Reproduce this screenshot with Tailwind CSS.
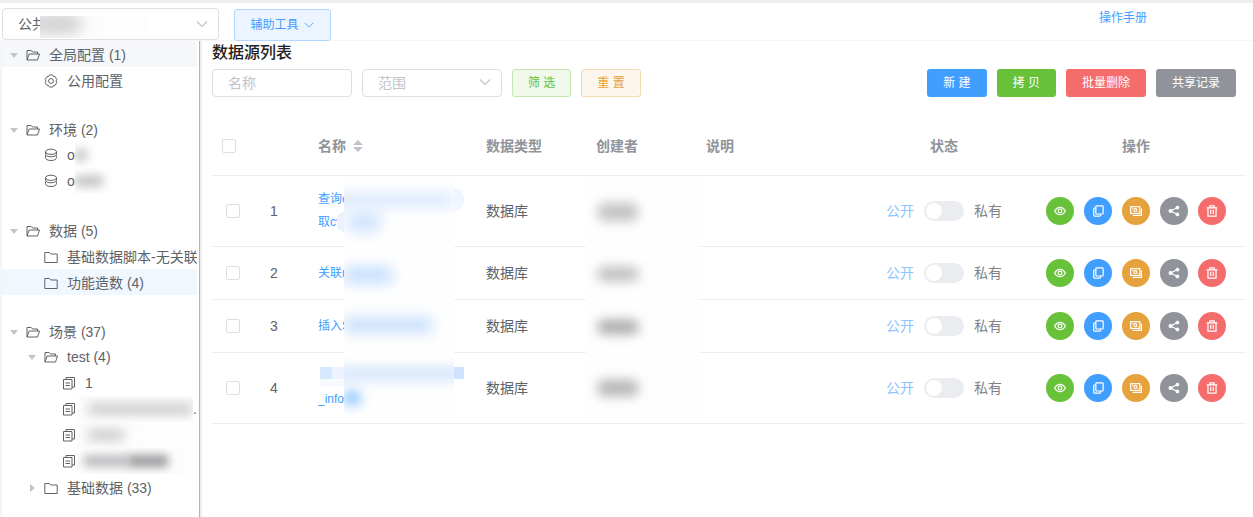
<!DOCTYPE html>
<html lang="zh-CN">
<head>
    <meta charset="UTF-8">
    <meta name="viewport" content="width=device-width, initial-scale=1.0">
    <title>数据源列表</title>
    <script src="https://cdn.jsdelivr.net/npm/@tailwindcss/browser@4"></script>
</head>
<body class="min-h-screen flex flex-col bg-white text-sm text-[#606266] font-['Liberation_Sans','Noto_Sans_CJK_SC',sans-serif]">

    <!-- Icons -->
    <svg class="hidden" xmlns="http://www.w3.org/2000/svg">
        <symbol id="i-folder-open" viewBox="0 0 14 14"><path d="M1 12V2.500h4.200l1.400 1.500H11.500V6M1 12l2.200-6h10.300l-2 6z"/></symbol>
        <symbol id="i-folder" viewBox="0 0 14 14"><path d="M.8 2.500h4.600l1.400 1.500h6.400V12.500H.8z"/></symbol>
        <symbol id="i-setting" viewBox="0 0 14 14"><path d="M5.200 1.200 7 .8l1.800.4.6 1.300 1.700.1 1.700 2.900-.8 1.500.8 1.500-1.700 2.900-1.700.1-.6 1.300-1.800.4-1.800-.4-.6-1.300-1.700-.1-1.700-2.900.8-1.500-.8-1.500 1.700-2.900 1.700-.1z"/><circle cx="7" cy="7" r="2.400"/></symbol>
        <symbol id="i-coin" viewBox="0 0 14 14"><ellipse cx="7" cy="3.800" rx="5.500" ry="2.600"/><path d="M1.500 3.800v2.400c0 1.500 2.400 2.600 5.500 2.600s5.500-1.100 5.500-2.600V3.800M1.500 7.500v2c0 1.900 2.400 3 5.500 3s5.500-1.100 5.500-3v-2"/></symbol>
        <symbol id="i-docs" viewBox="0 0 14 14"><path d="M1.500 3.500h8.500v9.500h-8.500zM4 3.500V1.500h8.500V11H10M3.500 7h4.500M3.500 9.500h4.500"/></symbol>
        <symbol id="i-view" viewBox="0 0 14 14"><path d="M.7 7C2.200 4.200 4.400 2.700 7 2.700S11.800 4.200 13.300 7C11.800 9.800 9.600 11.300 7 11.300S2.200 9.800.7 7z"/><circle cx="7" cy="7" r="2.200"/></symbol>
        <symbol id="i-copy" viewBox="0 0 14 14"><rect x="4.500" y="1" width="8.500" height="9.500" rx="1"/><path d="M4.500 3.500h-1.500a1 1 0 0 0-1 1V12a1 1 0 0 0 1 1h6a1 1 0 0 0 1-1v-1.500"/></symbol>
        <symbol id="i-money" viewBox="0 0 14 14"><rect x=".8" y="2" width="10.700" height="7.800"/><circle cx="6.200" cy="5.900" r="1.700"/><path d="M3 3.800v.8M9.400 7.200V8M13.300 4v8H3"/></symbol>
        <symbol id="i-share" viewBox="0 0 14 14"><path d="M11 3 3 7l8 4"/><g fill="currentColor" stroke="none"><circle cx="11" cy="3" r="2.200"/><circle cx="3" cy="7" r="2.400"/><circle cx="11" cy="11" r="2.200"/></g></symbol>
        <symbol id="i-delete" viewBox="0 0 14 14"><path d="M.8 3.300h12.400M4.500 3.300V1h5v2.300M2.300 3.300V13h9.400V3.300M5.500 5.500v5M8.500 5.500v5"/></symbol>
        <symbol id="i-down" viewBox="0 0 14 14"><path d="m2 4.500 5 5 5-5"/></symbol>
    </svg>

    <!-- Top bar -->
    <header class="h-[41px] flex items-start border-t-3 border-[#eee] border-b border-b-[#f6f6f6] pl-[2px] pr-[106px]">
        <div class="relative mt-[5px]">
            <select aria-label="项目" class="block appearance-none w-[217px] h-8 rounded border border-[#dcdfe6] bg-white pl-[15px] pr-8">
                <option>公共</option>
            </select>
            <div class="absolute left-[38px] top-2 w-[110px] h-[22px] overflow-hidden bg-[#fdfdfd] pointer-events-none">
                <i class="absolute -left-3 top-0 w-[52px] h-4 bg-[#c6c7c8] blur-[8px]"></i>
            </div>
            <svg class="absolute right-[10px] top-[9px] size-[14px] fill-none stroke-[#c0c4cc] stroke-[1.2] pointer-events-none"><use href="#i-down"/></svg>
        </div>
        <button class="ml-[15px] mt-[6px] h-8 w-[97px] flex items-center justify-center gap-1 rounded-[3px] border border-[#b3d8ff] bg-[#ecf5ff] text-xs text-[#409eff]">
            辅助工具
            <svg class="size-3 fill-none stroke-current"><use href="#i-down"/></svg>
        </button>
        <a href="#" class="ml-auto mt-[7px] text-xs text-[#409eff]">操作手册</a>
    </header>

    <div class="flex flex-1">
        <!-- Tree -->
        <nav class="w-[202px] shrink-0 border-l-2 border-l-[#f5f5f5] border-r-2 border-r-[#eee]">
            <div class="h-full border-r border-[#b4b4b4] pr-[2px]">
                <ul class="flex flex-col gap-[23px] fill-none stroke-[#606266] whitespace-nowrap overflow-hidden">
                    <li>
                        <div class="flex items-center h-[26px] pt-[2px] bg-[#f5f7fa]">
                            <span class="ml-2 mr-2 border-x-4 border-t-5 border-x-transparent border-t-[#c0c4cc]"></span>
                            <svg class="size-[14px] shrink-0 mr-[9px]"><use href="#i-folder-open"/></svg>全局配置 (1)
                        </div>
                        <div class="flex items-center h-[26px] pt-[2px] pl-[42px]">
                            <svg class="size-[14px] shrink-0 mr-[9px]"><use href="#i-setting"/></svg>公用配置
                        </div>
                    </li>
                    <li>
                        <div class="flex items-center h-[26px] pt-[2px]">
                            <span class="ml-2 mr-2 border-x-4 border-t-5 border-x-transparent border-t-[#c0c4cc]"></span>
                            <svg class="size-[14px] shrink-0 mr-[9px]"><use href="#i-folder-open"/></svg>环境 (2)
                        </div>
                        <div class="flex items-center h-[26px] pl-[42px]">
                            <svg class="size-[14px] shrink-0 mr-[9px]"><use href="#i-coin"/></svg>o
                            <span class="flex items-center h-[26px] w-12 overflow-hidden"><i class="h-3 w-3 bg-[#c4c5c7] blur-[5px]"></i></span>
                        </div>
                        <div class="flex items-center h-[26px] pl-[42px]">
                            <svg class="size-[14px] shrink-0 mr-[9px]"><use href="#i-coin"/></svg>o
                            <span class="flex items-center h-[26px] w-12 overflow-hidden"><i class="h-3 w-7 bg-[#c4c5c7] blur-[5px]"></i></span>
                        </div>
                    </li>
                    <li>
                        <div class="flex items-center h-[26px] pt-[2px]">
                            <span class="ml-2 mr-2 border-x-4 border-t-5 border-x-transparent border-t-[#c0c4cc]"></span>
                            <svg class="size-[14px] shrink-0 mr-[9px]"><use href="#i-folder-open"/></svg>数据 (5)
                        </div>
                        <div class="flex items-center h-[26px] pt-[2px] pl-[42px]">
                            <svg class="size-[14px] shrink-0 mr-[9px]"><use href="#i-folder"/></svg>基础数据脚本-无关联
                        </div>
                        <div class="flex items-center h-[26px] pt-[2px] pl-[42px] bg-[#f0f7ff]">
                            <svg class="size-[14px] shrink-0 mr-[9px]"><use href="#i-folder"/></svg>功能造数 (4)
                        </div>
                    </li>
                    <li>
                        <div class="flex items-center h-[26px] pt-[2px]">
                            <span class="ml-2 mr-2 border-x-4 border-t-5 border-x-transparent border-t-[#c0c4cc]"></span>
                            <svg class="size-[14px] shrink-0 mr-[9px]"><use href="#i-folder-open"/></svg>场景 (37)
                        </div>
                        <div class="flex items-center h-[26px] pl-[18px]">
                            <span class="ml-2 mr-2 border-x-4 border-t-5 border-x-transparent border-t-[#c0c4cc]"></span>
                            <svg class="size-[14px] shrink-0 mr-[9px]"><use href="#i-folder-open"/></svg>test (4)
                        </div>
                        <div class="flex items-center h-[26px] pl-[60px]">
                            <svg class="size-[14px] shrink-0 mr-[9px]"><use href="#i-docs"/></svg>1
                        </div>
                        <div class="flex items-center h-[26px] pl-[60px]">
                            <svg class="size-[14px] shrink-0"><use href="#i-docs"/></svg>
                            <span class="flex items-center h-[26px] w-[120px] overflow-hidden bg-[#fdfdfd] pl-3"><i class="h-[10px] w-full bg-[#c4c5c7] blur-[6px]"></i></span>.
                        </div>
                        <div class="flex items-center h-[26px] pl-[60px]">
                            <svg class="size-[14px] shrink-0"><use href="#i-docs"/></svg>
                            <span class="flex items-center h-[26px] w-[120px] overflow-hidden bg-[#fdfdfd] pl-3"><i class="h-[10px] w-9 bg-[#c4c5c7] blur-[6px]"></i></span>
                        </div>
                        <div class="flex items-center h-[26px] pl-[60px]">
                            <svg class="size-[14px] shrink-0"><use href="#i-docs"/></svg>
                            <span class="flex items-center h-[26px] w-[120px] overflow-hidden bg-[#fdfdfd] pl-2"><i class="h-3 w-11 bg-[#bbbcbe] blur-[5px]"></i><i class="h-3 w-10 bg-[#98999b] blur-[5px]"></i></span>
                        </div>
                        <div class="flex items-center h-[26px] pt-[2px] pl-[18px]">
                            <span class="ml-[10px] mr-[9px] border-y-4 border-l-5 border-y-transparent border-l-[#c0c4cc]"></span>
                            <svg class="size-[14px] shrink-0 mr-[9px]"><use href="#i-folder"/></svg>基础数据 (33)
                        </div>
                    </li>
                </ul>
            </div>
        </nav>

        <!-- Content -->
        <main class="flex-1 min-w-0 pl-[10px] pr-[7px]">
            <h1 class="h-7 text-base leading-6 font-medium text-[#222]">数据源列表</h1>

            <div class="flex items-center gap-[10px] pr-[10px] text-xs">
                <input type="text" placeholder="名称" aria-label="名称" class="w-[140px] h-7 rounded border border-[#dcdfe6] px-[15px] text-sm placeholder:text-[#c0c4cc]">
                <div class="relative">
                    <select aria-label="范围" class="block appearance-none w-[140px] h-7 rounded border border-[#dcdfe6] bg-white px-[15px] text-sm text-[#c0c4cc]">
                        <option>范围</option>
                    </select>
                    <svg class="absolute right-[10px] top-[6px] size-[14px] fill-none stroke-[#c0c4cc] stroke-[1.2] pointer-events-none"><use href="#i-down"/></svg>
                </div>
                <button class="h-7 px-[15px] rounded-[3px] border border-[#c2e7b0] bg-[#f0f9eb] text-[#67c23a]">筛 选</button>
                <button class="h-7 px-[15px] rounded-[3px] border border-[#f5dab1] bg-[#fdf6ec] text-[#e6a23c]">重 置</button>
                <button class="ml-auto h-7 px-4 rounded-[3px] bg-[#409eff] text-white">新 建</button>
                <button class="h-7 px-4 rounded-[3px] bg-[#67c23a] text-white">拷 贝</button>
                <button class="h-7 px-4 rounded-[3px] bg-[#f56c6c] text-white">批量删除</button>
                <button class="h-7 px-4 rounded-[3px] bg-[#909399] text-white">共享记录</button>
            </div>

            <table class="mt-[19px] w-full table-fixed border-separate border-spacing-0 text-left">
                <colgroup>
                    <col class="w-12"><col class="w-12"><col class="w-[168px]"><col class="w-[110px]">
                    <col class="w-[110px]"><col><col class="w-[164px]"><col class="w-[220px]">
                </colgroup>
                <thead class="text-[#909399]">
                    <tr class="h-[60px] *:border-b *:border-[#ebeef5] *:px-[10px]">
                        <th><input type="checkbox" aria-label="全选" class="block appearance-none size-[14px] rounded-xs border border-[#dcdfe6] bg-white"></th>
                        <th></th>
                        <th>
                            <button class="flex items-center gap-[7px] font-bold">名称
                                <svg class="w-[10px] h-3 fill-[#c0c4cc]" viewBox="0 0 10 12"><path d="M0 5l5-5 5 5zM0 7h10l-5 5z"/></svg>
                            </button>
                        </th>
                        <th>数据类型</th>
                        <th>创建者</th>
                        <th>说明</th>
                        <th class="text-center">状态</th>
                        <th class="text-center">操作</th>
                    </tr>
                </thead>
                <tbody id="rows"></tbody>
            </table>
        </main>
    </div>

    <script>
        // name: visible lines, mask: blurred part of the name, edge: bits left outside the mask, owner: blurred creator
        const rows = [
            {
                name: '查询c<br>取cv',
                mask: '<i class="absolute -left-2 top-4 w-[116px] h-4 bg-[#dfebfe] blur-[6px]"></i><i class="absolute left-1 top-9 w-8 h-5 bg-[#cfe4fe] blur-[7px]"></i>',
                edge: '<i class="absolute left-[146px] top-3 w-[10px] h-[23px] rounded-r-full bg-[#f1f6fe]"></i><i class="absolute left-[29px] top-9 w-[7px] h-5 rounded-l-full bg-[#e9f2fe]"></i>',
                owner: 'bg-[#c2c2c2] h-[18px]'
            },
            {
                name: '关联n',
                mask: '<i class="absolute left-0 top-5 w-12 h-4 bg-[#c3defe] blur-[7px]"></i>',
                edge: '',
                owner: 'bg-[#bcbcbc] h-[14px]'
            },
            {
                name: '插入S',
                mask: '<i class="absolute left-0 top-[18px] w-[88px] h-[14px] bg-[#c3dcfd] blur-[7px]"></i>',
                edge: '',
                owner: 'bg-[#a8a8a8] h-[14px]'
            },
            {
                name: '&nbsp;<br>_infor',
                mask: '<i class="absolute -left-2 top-[14px] w-[126px] h-[14px] bg-[#d6e6fd] blur-[6px]"></i><i class="absolute left-0 top-[38px] w-4 h-[14px] bg-[#8cc5ff] blur-[6px]"></i>',
                edge: '<i class="absolute left-[12px] top-[14px] w-3 h-3 bg-[#d5e8fe]"></i><i class="absolute left-6 top-[14px] w-3 h-3 bg-[#edf3fe]"></i><i class="absolute left-[12px] top-[26px] w-6 h-2 bg-[#f7fbff]"></i><i class="absolute left-[146px] top-[14px] w-[10px] h-3 bg-[#cfe2fe]"></i>',
                owner: 'bg-[#b4b4b4] h-4'
            }
        ];

        const iconButton = (label, color, icon) =>
            `<button aria-label="${label}" class="size-7 rounded-full flex items-center justify-center text-white ${color}"><svg class="size-3 fill-none stroke-current stroke-[1.4]"><use href="#${icon}"/></svg></button>`;

        document.getElementById('rows').innerHTML = rows.map((row, i) => `
            <tr class="*:border-b *:border-[#ebeef5] *:px-[10px] *:py-3">
                <td><input type="checkbox" aria-label="选择 ${i + 1}" class="block ml-1 appearance-none size-[14px] rounded-xs border border-[#dcdfe6] bg-white"></td>
                <td>${i + 1}</td>
                <td class="relative">
                    <a href="#" class="block text-xs leading-[23px] text-[#409eff]">${row.name}</a>
                    ${row.edge}
                    <span class="absolute left-9 top-0 w-[110px] ${i < 3 ? '-bottom-px' : 'bottom-0'} overflow-hidden bg-[#fefefe]">${row.mask}</span>
                </td>
                <td>数据库</td>
                <td class="relative">
                    <span class="absolute left-0 -right-[3px] top-0 ${i < 3 ? '-bottom-px' : 'bottom-0'} flex items-center pl-[11px] bg-[#fefefe]"><i class="w-[42px] rounded-full blur-[6px] ${row.owner}"></i></span>
                </td>
                <td></td>
                <td>
                    <label class="flex items-center justify-center gap-[10px]">
                        <span class="text-[#8cc5ff]">公开</span>
                        <input type="checkbox" role="switch" class="appearance-none w-10 h-5 rounded-full bg-[#ebecf0] before:block before:size-4 before:m-[2px] before:rounded-full before:bg-white">
                        <span class="text-[#808286]">私有</span>
                    </label>
                </td>
                <td>
                    <div class="flex justify-center gap-[10px]">
                        ${iconButton('查看', 'bg-[#67c23a]', 'i-view')}
                        ${iconButton('复制', 'bg-[#409eff]', 'i-copy')}
                        ${iconButton('造数', 'bg-[#e6a23c]', 'i-money')}
                        ${iconButton('共享', 'bg-[#909399]', 'i-share')}
                        ${iconButton('删除', 'bg-[#f56c6c]', 'i-delete')}
                    </div>
                </td>
            </tr>`).join('');
    </script>
</body>
</html>
